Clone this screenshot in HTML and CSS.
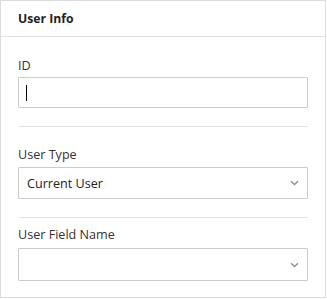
FILE: index.html
```html
<!DOCTYPE html>
<html>
<head>
<meta charset="utf-8">
<link rel="stylesheet" href="styles.css">
</head>
<body>
<div class="card">
  <div class="card-header">User Info</div>
  <div class="section section-first">
    <div class="label">ID</div>
    <div class="input"><span class="caret"></span></div>
  </div>
  <div class="section">
    <div class="label">User Type</div>
    <div class="select">
      <span class="select-value">Current User</span>
      <svg class="chevron" width="9" height="6" viewBox="0 0 9 6"><path d="M1 1.2 L4.5 4.6 L8 1.2" fill="none" stroke="#8f8f8f" stroke-width="1.4"/></svg>
    </div>
  </div>
  <div class="section section-last">
    <div class="label">User Field Name</div>
    <div class="select">
      <span class="select-value"></span>
      <svg class="chevron" width="9" height="6" viewBox="0 0 9 6"><path d="M1 1.2 L4.5 4.6 L8 1.2" fill="none" stroke="#8f8f8f" stroke-width="1.4"/></svg>
    </div>
  </div>
</div>
</body>
</html>
```
FILE: styles.css
```css
* { box-sizing: border-box; }
body {
  margin: 0;
  font-family: "Open Sans", "Noto Sans", sans-serif;
  font-size: 12.6px;
  color: #333;
  background: #fff;
}
.card {
  width: 326px;
  height: 298px;
  border: 1px solid #dcdcdc;
  display: flex;
  flex-direction: column;
}
.card-header {
  height: 36px;
  line-height: 35px;
  padding: 0 17px;
  font-size: 12.2px;
  font-weight: 700;
  color: #222;
  border-bottom: 1px solid #e3e3e3;
}
.section {
  margin: 0 17px;
  padding: 18px 0 18px;
  border-bottom: 1px solid #e3e3e3;
}
.section-first { padding-top: 19px; }
.section-first .input { margin-top: -1px; }
.section-last {
  border-bottom: none;
  padding-top: 7px;
}
.section-last .select { height: 33px; margin-top: 3px; }
.label {
  line-height: 20px;
  height: 20px;
  margin-bottom: 2px;
}
.input {
  height: 31px;
  border: 1px solid #cccccc;
  border-radius: 1px;
  display: flex;
  align-items: center;
  padding-left: 7px;
}
.caret {
  display: block;
  width: 1px;
  height: 16px;
  background: #000;
}
.select {
  height: 32px;
  border: 1px solid #cccccc;
  border-radius: 1px;
  display: flex;
  align-items: center;
  justify-content: space-between;
  padding: 0 8px 0 8px;
  color: #222;
}
.chevron { display: block; }
```
